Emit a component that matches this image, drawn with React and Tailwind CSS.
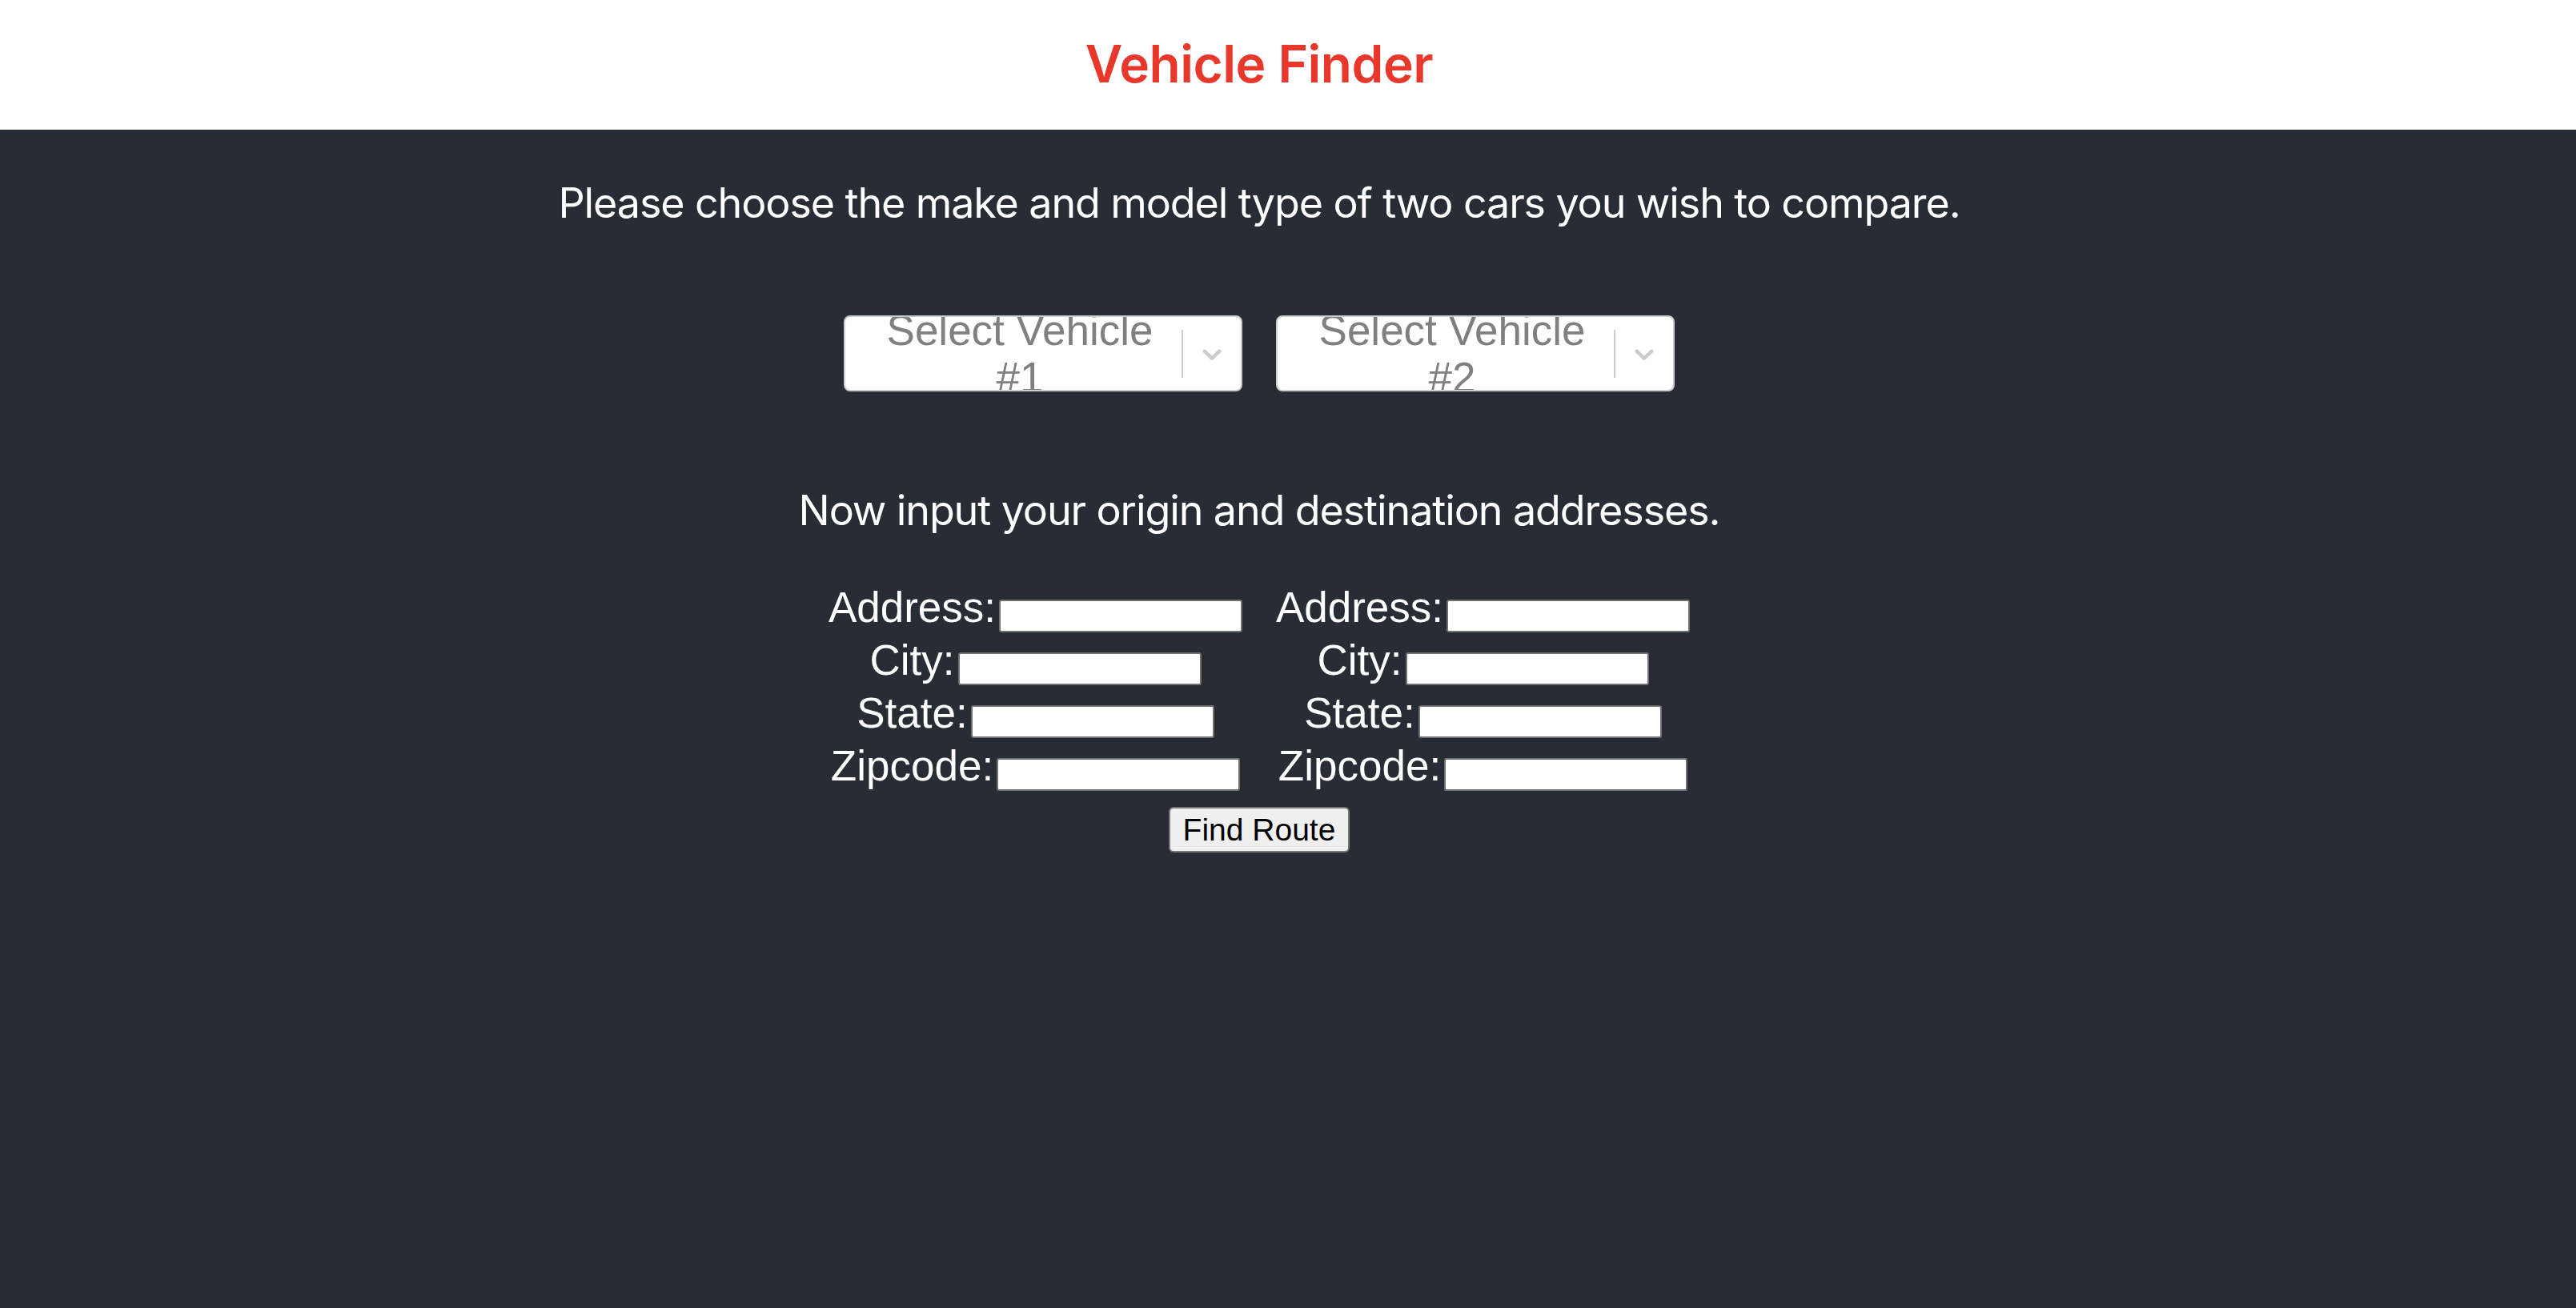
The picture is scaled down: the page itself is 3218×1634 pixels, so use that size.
import React from 'react'

const Chevron = () => (
    <svg viewBox="0 0 20 20" className="h-[40px] w-[40px] fill-[#cccccc]">
        <path d="M4.516 7.548c0.436-0.446 1.043-0.481 1.576 0l3.908 3.747 3.908-3.747c0.533-0.481 1.141-0.446 1.574 0 0.436 0.445 0.408 1.197 0 1.615-0.406 0.418-4.695 4.502-4.695 4.502-0.217 0.223-0.502 0.335-0.787 0.335s-0.57-0.112-0.789-0.335c0 0-4.287-4.084-4.695-4.502s-0.436-1.17 0-1.615z" />
    </svg>
)

const VehicleSelect = ({ label }) => (
    <div className="flex h-[95px] w-[498px] items-stretch overflow-hidden rounded-[8px] border-2 border-[#cccccc] bg-white">
        <div className="flex flex-1 items-center justify-center overflow-hidden pl-[32px] pr-[16px] pt-[1px]">
            <span className="max-w-[370px] text-center font-['Liberation_Sans',sans-serif] text-[53px] leading-[59px] text-[#808080]">
                {label}
            </span>
        </div>
        <div className="flex items-center">
            <span className="h-[60px] w-[2px] bg-[#cccccc]" />
            <div className="flex items-center px-[16px]">
                <Chevron />
            </div>
        </div>
    </div>
)

const fields = ['Address', 'City', 'State', 'Zipcode']

const AddressColumn = () => (
    <div className="flex w-[517px] flex-col items-center">
        {fields.map((name) => (
            <div key={name} className="flex h-[66px] items-start gap-[4px]">
                <span className="font-['Liberation_Sans',sans-serif] text-[53px] leading-[66px] text-white">{name}:</span>
                <input
                    type="text"
                    className="mt-[23px] h-[41px] w-[304px] rounded-[3px] border-2 border-[#707070] bg-white px-1 outline-none"
                />
            </div>
        ))}
    </div>
)

const App = () => {
    return (
        <div className="min-h-screen bg-[#282c34] font-['Inter',sans-serif]">
            <header className="flex h-[162px] items-center justify-center bg-white pr-[72px] pb-[2px]">
                <h1 className="text-[64px] font-semibold leading-none tracking-[-0.5px] text-[#e8382b]">Vehicle Finder</h1>
            </header>

            <main className="flex flex-col items-center pr-[72px] text-white">
                <p className="mt-[62px] text-[52px] leading-[60px] tracking-[-1.1px]">
                    Please choose the make and model type of two cars you wish to compare.
                </p>

                <div className="mt-[110px] flex gap-[42px]">
                    <VehicleSelect label="Select Vehicle #1" />
                    <VehicleSelect label="Select Vehicle #2" />
                </div>

                <p className="mt-[119px] text-[52px] leading-[60px] tracking-[-1.1px]">
                    Now input your origin and destination addresses.
                </p>

                <div className="mt-[58px] flex gap-[42px]">
                    <AddressColumn />
                    <AddressColumn />
                </div>

                <button className="mt-[18px] h-[57px] rounded-[6px] border-2 border-[#767676] bg-[#efefef] px-[16px] font-['Liberation_Sans',sans-serif] text-[39px] leading-none text-black">
                    Find Route
                </button>
            </main>
        </div>
    )
}

export default App
